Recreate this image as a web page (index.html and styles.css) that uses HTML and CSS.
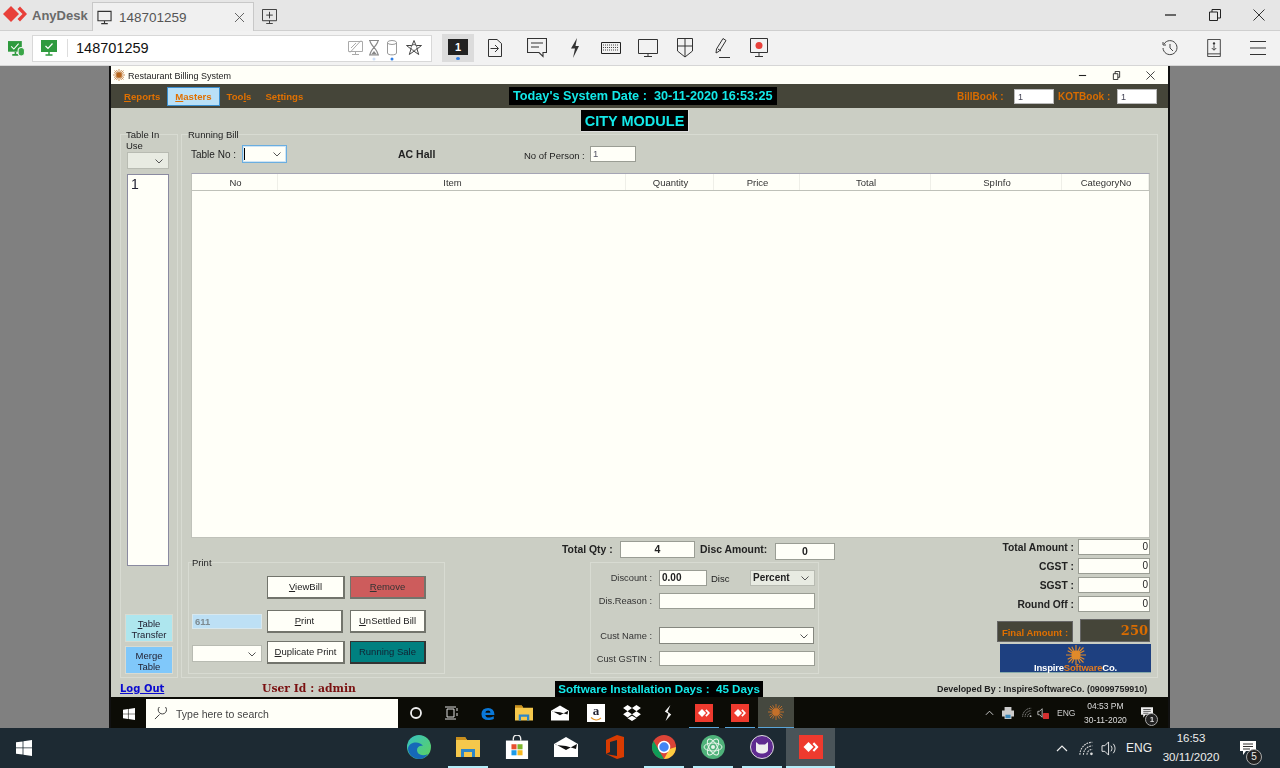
FILE: index.html
```html
<!DOCTYPE html>
<html lang="en">
<head>
    <meta charset="UTF-8">
    <title>AnyDesk</title>
    <link rel="stylesheet" href="styles.css">
</head>
<body>
<svg class="defs" width="0" height="0">
    <symbol id="ad" viewBox="0 0 24 16"><path d="M8 0L16 8L8 16L0 8Z" fill="currentColor"/><path d="M17 .5L24 8L17 15.500L14.500 13L19.500 8L14.500 3Z" fill="currentColor"/></symbol>
    <symbol id="mon" viewBox="0 0 16 16"><path d="M1 1.500H15V11.500H1ZM8 11.500V14.500M4.500 14.500H11.500" fill="none" stroke="currentColor" stroke-width="1.200"/></symbol>
    <symbol id="win" viewBox="0 0 16 16"><path d="M0 2.300L6.600 1.400V7.500H0ZM7.400 1.300L16 0V7.500H7.400ZM0 8.300H6.600V14.600L0 13.700ZM7.400 8.300H16V16L7.400 14.700Z" fill="currentColor"/></symbol>
    <symbol id="mail" viewBox="0 0 24 20"><path d="M0 7L12 0L24 7V20H0Z" fill="#fff"/><path d="M1 7L12 13L23 7L22 12L12 9L2 8Z" fill="#111"/></symbol>
    <symbol id="folder" viewBox="0 0 24 20"><path d="M0 0H9L11 3H24V20H0Z" fill="#f5c84c"/><path d="M0 0H9L11 3H0Z" fill="#c98f1d"/><path d="M5 12H19V20H16V15H8V20H5Z" fill="#2c86c8"/></symbol>
    <symbol id="wifi" viewBox="0 0 18 16"><path d="M1 15A14 14 0 0 1 15 1M5 15A10 10 0 0 1 15 5M9 15A6 6 0 0 1 15 9" fill="none" stroke="currentColor" stroke-width="1.200" stroke-dasharray="2 1"/><circle cx="14" cy="14" r="1.500" fill="currentColor"/></symbol>
    <symbol id="note" viewBox="0 0 16 14"><path d="M0 0H16V10H6L3 14V10H0Z" fill="currentColor"/><path d="M3 3H13M3 5.500H13M3 8H10" stroke="#333" stroke-width="1"/></symbol>
    <symbol id="sun" viewBox="0 0 24 24"><path d="M12 0V24M0 12H24M3 3L21 21M21 3L3 21M7 2L17 22M17 2L7 22M2 7L22 17M2 17L22 7" stroke="currentColor" stroke-width="1.400"/><circle cx="12" cy="12" r="5.500" fill="currentColor"/></symbol>
</svg>

<div class="tabbar">
    <svg class="logo"><use href="#ad"/></svg>
    <span class="brand">AnyDesk</span>
    <div class="tab">
        <svg class="tab-mon"><use href="#mon"/></svg>
        <span class="tab-text">148701259</span>
        <svg class="tab-x" viewBox="0 0 10 10"><path d="M0 0L10 10M10 0L0 10" stroke="#555" fill="none"/></svg>
    </div>
    <svg class="newtab" viewBox="0 0 16 16"><path d="M.5 .5H15.500V12.500H.5ZM8 3V10M4.500 6.500H11.500M8 12.500V15.500M4.500 15.500H11.500" fill="none" stroke="#333"/></svg>
    <div class="winctl">
        <svg viewBox="0 0 12 12"><path d="M0 6H11" stroke="#222" stroke-width="1.300"/></svg>
        <svg viewBox="0 0 12 12"><path d="M.5 3H8.500V11.500H.5ZM3 3V.5H11.500V9H8.500" fill="none" stroke="#222"/></svg>
        <svg viewBox="0 0 12 12"><path d="M.5 .5L11.500 11.500M11.500 .5L.5 11.500" stroke="#333" fill="none"/></svg>
    </div>
</div>

<div class="toolbar">
    <svg class="status-ic" viewBox="0 0 16 16"><path d="M0 1H13V11H0Z" fill="#2e9a3e"/><path d="M3 6L5.500 8.500L10 3.500" stroke="#fff" fill="none"/><path d="M4 14H10M7 11V14" stroke="#2e9a3e" stroke-width="1.500"/><rect x="9.500" y="7" width="6" height="8" rx="3" fill="#3aa648" stroke="#f2f2f2"/></svg>
    <div class="addr">
        <svg class="addr-ic" viewBox="0 0 16 16"><path d="M0 0H16V12H0Z" fill="#2e9a3e"/><path d="M4.500 6L7 8.500L11.500 3.500" stroke="#fff" fill="none" stroke-width="1.200"/><path d="M4.500 15H11.500M8 12V15" stroke="#2e9a3e" stroke-width="1.500"/></svg>
        <span class="addr-text">148701259</span>
        <div class="addr-icons">
            <svg class="ai-mon" viewBox="0 0 15 22"><path d="M.5 1.500H14.500V11.500H.5ZM7.500 11.500V14.500M4 14.500H11M2 12.500L13 .5M3 8L8 3" fill="none" stroke="#aaa"/></svg>
            <svg class="ai-hour" viewBox="0 0 10 22"><path d="M0 .5H10M0 15H10M1 .5C1 5.500 9 9 9 15H1C1 9 9 5.500 9 .5" fill="none" stroke="#888" stroke-width="1.200"/><path d="M2 14.500L5 11L8 14.500Z" fill="#888"/><circle cx="5" cy="19" r="1.500" fill="#cfe0f7"/></svg>
            <svg class="ai-cyl" viewBox="0 0 10 22"><ellipse cx="5" cy="2.500" rx="4.500" ry="2" fill="none" stroke="#999"/><path d="M.5 2.500V13C.5 15.500 9.500 15.500 9.500 13V2.500" fill="none" stroke="#999"/><circle cx="5" cy="19" r="1.500" fill="#2f7fe6"/></svg>
            <svg class="ai-star" viewBox="0 0 16 22"><path d="M8 .5L10 5.500H15.500L11 9L12.700 14.500L8 11.200L3.300 14.500L5 9L.5 5.500H6Z" fill="none" stroke="#444"/><circle cx="8" cy="7.500" r="3" fill="none" stroke="#666"/></svg>
        </div>
    </div>
    <div class="session"><span>1</span></div>
    <div class="tools">
        <svg class="t-door" viewBox="0 0 14 18"><path d="M.5 .5H9L13.500 4.500V17.500H.5ZM2.500 9.500H10M7 6L10.500 9.500L7 13" fill="none" stroke="#333"/></svg>
        <svg class="t-chat" viewBox="0 0 20 20"><path d="M.5 .5H19.500V14.500H16V18.500L12 14.500H.5ZM4 5H16M4 9H12" fill="none" stroke="#333" stroke-width="1.100"/></svg>
        <svg class="t-bolt" viewBox="0 0 10 20"><path d="M7 0L1 10.500H5L3 20L9 8H5.500Z" fill="#333"/></svg>
        <svg class="t-kbd" viewBox="0 0 20 12"><path d="M.5 .5H19.500V11.500H.5Z" fill="none" stroke="#222"/><path d="M2 3H18M2 5.500H18M2 8H18" stroke="#444" stroke-dasharray="1 1"/></svg>
        <svg class="t-mon" viewBox="0 0 20 18"><path d="M.5 .5H19.500V14.500H.5ZM10 14.500V17.500M6 17.500H14" fill="none" stroke="#333"/></svg>
        <svg class="t-shield" viewBox="0 0 16 20"><path d="M.5 .5H15.500V13L8 19L.5 13ZM8 .5V19M.5 8H15.500" fill="none" stroke="#333"/></svg>
        <svg class="t-pen" viewBox="0 0 15 20"><path d="M1 15L1.500 11L8 .5L11 2.500L4.500 13ZM4 19.500H15M3 11L6 13" fill="none" stroke="#333"/></svg>
        <svg class="t-rec" viewBox="0 0 18 20"><path d="M.5 .5H17.500V14.500H.5ZM9 14.500V18.500M5 18.500H13" fill="none" stroke="#333"/><circle cx="9" cy="7.500" r="3.500" fill="#e8403a"/></svg>
    </div>
    <div class="tools-right">
        <svg viewBox="0 0 16 16"><path d="M2 4A7 7 0 1 1 1 8M1 2V5H4M8 4V8L11 11" fill="none" stroke="#444"/></svg>
        <svg viewBox="0 0 16 20"><path d="M1 .5H15V19.500H1ZM1 16.500H15M8 7V12M5.500 10L8 12.500L10.500 10" fill="none" stroke="#333"/><circle cx="8" cy="5" r="1.300" fill="#333"/></svg>
        <svg viewBox="0 0 16 16"><path d="M0 1.500H16M0 8H16M0 14.500H16" stroke="#333"/></svg>
    </div>
</div>

<div class="remote">
    <div class="screen">
        <div class="titlebar">
            <svg class="app-ic"><use href="#sun"/></svg>
            <span class="app-title">Restaurant Billing System</span>
            <div class="app-ctl">
                <svg viewBox="0 0 10 10"><path d="M1 5H9" stroke="#222" stroke-width="1.200"/></svg>
                <svg viewBox="0 0 10 10"><path d="M1.500 3H6.500V9.500H1.500ZM3.500 3V.5H8.500V7H6.500" fill="none" stroke="#222"/></svg>
                <svg viewBox="0 0 10 10"><path d="M.5 .5L9.500 9.500M9.500 .5L.5 9.500" stroke="#333"/></svg>
            </div>
        </div>
        <div class="menubar">
            <div class="menus">
                <span class="menu"><u>R</u>eports</span>
                <span class="menu menu-on"><u>M</u>asters</span>
                <span class="menu">Too<u>l</u>s</span>
                <span class="menu">Se<u>t</u>tings</span>
            </div>
            <span class="sysdate">Today's System Date :&nbsp; 30-11-2020 16:53:25</span>
            <span class="book book-bill">BillBook :</span>
            <span class="book-in">1</span>
            <span class="book book-kot">KOTBook :</span>
            <span class="book-in">1</span>
        </div>

        <div class="appbody">
            <div class="module"><span>CITY MODULE</span></div>
            <div class="columns">
                <div class="group side">
                    <div class="side-label">Table In Use</div>
                    <div class="combo combo-side"><svg class="chev" viewBox="0 0 8 5"><path d="M.5 .5L4 4L7.500 .5" fill="none" stroke="#555"/></svg></div>
                    <div class="listbox">1</div>
                    <div class="sidebtn sidebtn-a"><u>T</u>able<br>Transfer</div>
                    <div class="sidebtn sidebtn-b">Merge<br>Table</div>
                </div>

                <div class="group main">
                    <div class="legend">Running Bill</div>
                    <div class="toprow">
                        <span class="tn-label">Table No :</span>
                        <div class="combo combo-table"><i class="caret"></i><svg class="chev" viewBox="0 0 8 5"><path d="M.5 .5L4 4L7.500 .5" fill="none" stroke="#555"/></svg></div>
                        <span class="hall">AC Hall</span>
                        <span class="persons">No of Person :</span>
                        <span class="field field-persons">1</span>
                    </div>

                    <div class="bill">
                        <div class="bill-head">
                            <span>No</span><span>Item</span><span>Quantity</span><span>Price</span><span>Total</span><span>SpInfo</span><span>CategoryNo</span>
                        </div>
                    </div>

                    <div class="bottom">
                        <div class="group print">
                            <div class="legend">Print</div>
                            <div class="print-row print-first">
                                <span class="print-blank"></span>
                                <span class="btn btn-l"><u>V</u>iewBill</span>
                                <span class="btn btn-red"><u>R</u>emove</span>
                            </div>
                            <div class="print-row print-second">
                                <span class="bill-no">611</span>
                                <span class="btn btn-s"><u>P</u>rint</span>
                                <span class="btn btn-r"><u>U</u>nSettled Bill</span>
                            </div>
                            <div class="print-row print-third">
                                <div class="combo combo-print"><svg class="chev" viewBox="0 0 8 5"><path d="M.5 .5L4 4L7.500 .5" fill="none" stroke="#555"/></svg></div>
                                <span class="btn btn-l"><u>D</u>uplicate Print</span>
                                <span class="btn btn-teal">Running Sale</span>
                            </div>
                        </div>

                        <div class="center">
                            <div class="qty-row">
                                <b class="qty-label">Total Qty :</b>
                                <span class="field field-qty">4</span>
                                <b class="disc-label">Disc Amount:</b>
                                <span class="field field-disc">0</span>
                            </div>
                            <div class="group discount">
                                <div class="form-row form-first">
                                    <span class="form-label">Discount :</span>
                                    <span class="field field-pct">0.00</span>
                                    <span class="disc-word">Disc</span>
                                    <div class="combo combo-pct">Percent<svg class="chev" viewBox="0 0 8 5"><path d="M.5 .5L4 4L7.500 .5" fill="none" stroke="#555"/></svg></div>
                                </div>
                                <div class="form-row form-reason">
                                    <span class="form-label">Dis.Reason :</span>
                                    <span class="field field-wide"></span>
                                </div>
                                <div class="form-row form-name">
                                    <span class="form-label">Cust Name :</span>
                                    <div class="combo combo-name"><svg class="chev" viewBox="0 0 8 5"><path d="M.5 .5L4 4L7.500 .5" fill="none" stroke="#555"/></svg></div>
                                </div>
                                <div class="form-row form-gst">
                                    <span class="form-label">Cust GSTIN :</span>
                                    <span class="field field-wide"></span>
                                </div>
                            </div>
                        </div>

                        <div class="totals">
                            <div class="total-row"><b>Total Amount :</b><span class="field field-num">0</span></div>
                            <div class="total-row"><b>CGST :</b><span class="field field-num">0</span></div>
                            <div class="total-row"><b>SGST :</b><span class="field field-num">0</span></div>
                            <div class="total-row"><b>Round Off :</b><span class="field field-num">0</span></div>
                            <div class="final-row">
                                <span class="final-label">Final Amount :</span>
                                <span class="final-value">250</span>
                            </div>
                            <div class="brandbox">
                                <svg class="brand-sun"><use href="#sun"/></svg>
                                <span class="brand-name">Inspire<em>Software</em>Co.</span>
                            </div>
                        </div>
                    </div>
                </div>
            </div>
        </div>

        <div class="statusbar">
            <a class="logout">Log Out</a>
            <span class="userid">User Id : admin</span>
            <span class="days">Software Installation Days :&nbsp; 45 Days</span>
            <span class="dev">Developed By : InspireSoftwareCo. (09099759910)</span>
        </div>

        <div class="rtask">
            <svg class="r-start"><use href="#win"/></svg>
            <div class="r-search">
                <svg viewBox="0 0 14 14"><path d="M13 1A1 1 0 0 0 5 5A4 4 0 1 0 13 1ZM6 8L1 13" fill="none" stroke="#333"/></svg>
                <span>Type here to search</span>
            </div>
            <span class="slot"><svg class="s14" viewBox="0 0 14 14"><circle cx="7" cy="7" r="5" fill="none" stroke="#eee" stroke-width="1.800"/></svg></span>
            <span class="slot"><svg class="s14" viewBox="0 0 14 14"><path d="M2 3H9V11H2ZM0 1H11M0 13H11M12 2V5M12 7V10" fill="none" stroke="#ddd"/></svg></span>
            <span class="slot"><span class="edge-e">e</span></span>
            <span class="slot"><svg class="s18"><use href="#folder"/></svg></span>
            <span class="slot"><svg class="s18"><use href="#mail"/></svg></span>
            <span class="slot"><span class="amazon">a<svg viewBox="0 0 12 4"><path d="M1 .5C4 3.500 8 3.500 11 1" fill="none" stroke="#e8962a" stroke-width="1.200"/></svg></span></span>
            <span class="slot"><svg class="s18" viewBox="0 0 20 18"><path d="M5 0L10 3.500L5 7L0 3.500ZM15 0L20 3.500L15 7L10 3.500ZM5 7L10 10.500L5 14L0 10.500ZM15 7L20 10.500L15 14L10 10.500ZM5 15L10 12L15 15L10 18Z" fill="#fff"/></svg></span>
            <span class="slot"><svg class="s18" viewBox="0 0 10 20"><path d="M8 0L1 8L5.500 11L2 20L9 12L4.500 8.500Z" fill="#f4f4f4"/></svg></span>
            <span class="slot slot-line"><svg class="adsq"><use href="#ad"/></svg></span>
            <span class="slot slot-line"><svg class="adsq"><use href="#ad"/></svg></span>
            <span class="slot slot-on"><svg class="s18 r-sun"><use href="#sun"/></svg></span>
            <div class="r-tray">
                <svg class="r-up" viewBox="0 0 10 6"><path d="M1 5L5 1L9 5" fill="none" stroke="#ddd"/></svg>
                <svg class="r-print" viewBox="0 0 14 14"><path d="M3 0H11V4H3ZM0 4H14V11H11V14H3V11H0Z" fill="#ccc"/><path d="M4 9H10V13H4Z" fill="#3b87b8"/></svg>
                <svg class="r-wifi"><use href="#wifi"/></svg>
                <svg class="r-vol" viewBox="0 0 14 14"><path d="M1 5H3L6 2V12L3 9H1Z" fill="none" stroke="#ccc"/><rect x="7" y="7" width="7" height="7" rx="1" fill="#d32f2f"/></svg>
                <span class="r-eng">ENG</span>
                <span class="r-clock">04:53 PM<br>30-11-2020</span>
                <span class="r-note"><svg><use href="#note"/></svg><b>1</b></span>
            </div>
        </div>
    </div>
</div>

<div class="taskbar">
    <svg class="start"><use href="#win"/></svg>
    <span class="tslot">
        <svg class="s24" viewBox="0 0 24 24"><defs><linearGradient id="eg" x1="0" y1="0" x2="1" y2="1"><stop offset="0" stop-color="#35c1c4"/><stop offset="1" stop-color="#5fd35a"/></linearGradient></defs><circle cx="12" cy="12" r="12" fill="url(#eg)"/><path d="M1 13C1 20 7 24 12 24C16 24 19 22 21 19C15 22 10 19 10 15C10 12 13 10 16 11C13 6 3 6 1 13Z" fill="#1668b8"/></svg>
    </span>
    <span class="tslot tslot-line"><svg class="s24"><use href="#folder"/></svg></span>
    <span class="tslot">
        <svg class="s24" viewBox="0 0 24 26"><path d="M8 6V4A4 4 0 0 1 16 4V6" fill="none" stroke="#eee" stroke-width="1.500"/><path d="M0 6H24V26H0Z" fill="#fff"/><path d="M6 10H11.500V15.500H6Z" fill="#e8502f"/><path d="M12.500 10H18V15.500H12.500Z" fill="#7db52d"/><path d="M6 16.500H11.500V22H6Z" fill="#1e9be8"/><path d="M12.500 16.500H18V22H12.500Z" fill="#f8b81f"/></svg>
    </span>
    <span class="tslot"><svg class="s24"><use href="#mail"/></svg></span>
    <span class="tslot"><svg class="s24" viewBox="0 0 18 24"><path d="M0 5L11 0L18 2V22L11 24L0 19L11 21V5L4 7V17L0 19Z" fill="#d83b01"/></svg></span>
    <span class="tslot tslot-line">
        <svg class="s24" viewBox="0 0 24 24"><circle cx="12" cy="12" r="12" fill="#db4437"/><path d="M12 24A12 12 0 0 1 1.600 6L7 15.500L12 24Z" fill="#0f9d58"/><path d="M12 24L17.500 14L24 12A12 12 0 0 1 12 24Z" fill="#ffcd40"/><circle cx="12" cy="12" r="5.500" fill="#4285f4" stroke="#fff" stroke-width="1.500"/></svg>
    </span>
    <span class="tslot tslot-line">
        <svg class="s24" viewBox="0 0 24 24"><circle cx="12" cy="12" r="12" fill="#4fb27a"/><g fill="none" stroke="#e8f4ea"><ellipse cx="12" cy="12" rx="9" ry="4"/><ellipse cx="12" cy="12" rx="9" ry="4" transform="rotate(60 12 12)"/><ellipse cx="12" cy="12" rx="9" ry="4" transform="rotate(120 12 12)"/></g><circle cx="12" cy="12" r="2" fill="#e8f4ea"/></svg>
    </span>
    <span class="tslot tslot-line">
        <svg class="s24" viewBox="0 0 24 24"><circle cx="12" cy="12" r="11.500" fill="#5f2b90" stroke="#ddd"/><path d="M6 7L9 9.500H15L18 7V15C18 17 15 18.500 12 18.500C9 18.500 6 17 6 15Z" fill="#eee"/></svg>
    </span>
    <span class="tslot tslot-on"><svg class="adsq adsq-big"><use href="#ad"/></svg></span>
    <div class="tray">
        <svg class="tr-up" viewBox="0 0 12 7"><path d="M1 6L6 1L11 6" fill="none" stroke="#eee" stroke-width="1.200"/></svg>
        <svg class="tr-wifi"><use href="#wifi"/></svg>
        <svg class="tr-vol" viewBox="0 0 18 16"><path d="M1 5H4L8 1V15L4 11H1ZM10.500 5C12 7 12 9 10.500 11M13 3C15.500 6 15.500 10 13 13" fill="none" stroke="#eee"/></svg>
        <span class="tr-eng">ENG</span>
        <span class="tr-clock">16:53<br>30/11/2020</span>
        <span class="tr-note"><svg><use href="#note"/></svg><b>5</b></span>
    </div>
</div>
</body>
</html>
```

FILE: styles.css
```css
* {
    box-sizing: border-box;
}

html, body {
    margin: 0;
    padding: 0;
}

body {
    width: 1280px;
    height: 768px;
    overflow: hidden;
    display: flex;
    flex-direction: column;
    font-family: "Liberation Sans", Arial, sans-serif;
    font-size: 10px;
    color: #222;
    background: #808080;
}

svg {
    display: block;
    flex: none;
}

.defs {
    position: absolute;
}

/* anydesk window */
.tabbar {
    height: 31px;
    flex: none;
    display: flex;
    align-items: flex-end;
    background: #e6e6e6;
    border-bottom: 1px solid #cfcfcf;
}

.logo {
    width: 24px;
    height: 16px;
    margin: 0 0 8px 3px;
    color: #e8403a;
}

.brand {
    width: 60px;
    margin-left: 5px;
    padding-bottom: 7px;
    font-size: 13px;
    font-weight: bold;
    color: #6a6a6a;
}

.tab {
    width: 162px;
    height: 29px;
    margin-bottom: -1px;
    display: flex;
    align-items: center;
    background: #f0f0f0;
    border: 1px solid #c8c8c8;
    border-bottom: 0;
}

.tab-mon {
    width: 15px;
    height: 15px;
    margin-left: 4px;
    color: #333;
}

.tab-text {
    width: 110px;
    margin-left: 7px;
    font-size: 13.500px;
    color: #555;
}

.tab-x {
    width: 9px;
    height: 9px;
    margin-left: 6px;
}

.newtab {
    width: 15px;
    height: 15px;
    margin: 0 0 6px 8px;
}

.winctl {
    margin-left: auto;
    display: flex;
    gap: 32px;
    padding: 0 15px 9px 0;
}

.winctl svg {
    width: 12px;
    height: 12px;
}

.toolbar {
    height: 35px;
    flex: none;
    display: flex;
    align-items: center;
    background: #f2f2f2;
    border-bottom: 1px solid #d6d6d6;
}

.status-ic {
    width: 17px;
    height: 17px;
    margin-left: 8px;
}

.addr {
    width: 400px;
    height: 27px;
    margin-left: 7px;
    display: flex;
    align-items: center;
    background: #fff;
    border: 1px solid #d8d8d8;
}

.addr-ic {
    width: 16px;
    height: 16px;
    margin-left: 8px;
}

.addr-text {
    margin-left: 10px;
    padding-left: 8px;
    border-left: 1px solid #ddd;
    font-size: 14.500px;
    line-height: 18px;
    color: #111;
}

.addr-icons {
    margin-left: auto;
    display: flex;
    padding: 5px 9px 0 0;
}

.addr-icons svg {
    height: 22px;
}

.ai-mon { width: 15px; }
.ai-hour { width: 10px; margin-left: 6px; }
.ai-cyl { width: 10px; margin-left: 8px; }
.ai-star { width: 16px; margin-left: 9px; }

.session {
    position: relative;
    width: 32px;
    height: 28px;
    margin-left: 10px;
    display: flex;
    align-items: center;
    justify-content: center;
    background: #dcdcdc;
}

.session span {
    width: 20px;
    height: 16px;
    margin-top: -2px;
    background: #222;
    color: #fff;
    font-size: 11px;
    font-weight: bold;
    line-height: 16px;
    text-align: center;
}

.session::after {
    content: "";
    position: absolute;
    left: 14px;
    bottom: 2px;
    width: 4px;
    height: 3px;
    border-radius: 50%;
    background: #2f7fe6;
}

.tools {
    display: flex;
    align-items: center;
    margin-left: 14px;
}

.t-door { width: 14px; height: 18px; }
.t-chat { width: 20px; height: 20px; margin-left: 25px; }
.t-bolt { width: 10px; height: 20px; margin-left: 23px; }
.t-kbd { width: 20px; height: 12px; margin-left: 21px; }
.t-mon { width: 20px; height: 18px; margin-left: 17px; }
.t-shield { width: 16px; height: 20px; margin-left: 19px; }
.t-pen { width: 15px; height: 20px; margin-left: 22px; }
.t-rec { width: 18px; height: 20px; margin-left: 20px; }

.tools-right {
    margin-left: auto;
    padding-right: 14px;
    display: flex;
    align-items: center;
    gap: 28px;
}

.tools-right svg {
    width: 16px;
    height: 18px;
}

.remote {
    flex: 1;
    min-height: 0;
    display: flex;
    padding-left: 109px;
}

.screen {
    width: 1061px;
    display: flex;
    flex-direction: column;
    border-left: 2px solid #111;
    border-right: 2px solid #111;
    filter: blur(.3px);
}

/* billing app */
.titlebar {
    height: 18px;
    flex: none;
    display: flex;
    align-items: center;
    background: #fffff8;
}

.app-ic {
    width: 12px;
    height: 12px;
    margin-left: 2px;
    color: #b5651d;
}

.app-title {
    margin: 1px 0 0 3px;
    font-size: 9px;
    color: #222;
}

.app-ctl {
    margin-left: auto;
    display: flex;
    gap: 25px;
    padding-right: 13px;
}

.app-ctl svg {
    width: 9px;
    height: 9px;
}

.menubar {
    height: 24px;
    flex: none;
    display: flex;
    align-items: center;
    background: #454539;
}

.menus {
    width: 398px;
    flex: none;
    display: flex;
    align-items: center;
    padding-left: 6px;
}

.menu {
    padding: 0 7px;
    height: 19px;
    display: flex;
    align-items: center;
    font-size: 9.600px;
    font-weight: bold;
    color: #e07000;
    white-space: pre;
}

.menu-on {
    background: #b9e0f7;
    border: 1px solid #3a8fd0;
}

.sysdate {
    width: 268px;
    height: 18px;
    flex: none;
    padding-left: 4px;
    background: #000;
    color: #14e8e8;
    font-size: 12.700px;
    font-weight: bold;
    line-height: 18px;
    white-space: nowrap;
}

.book {
    font-size: 10px;
    font-weight: bold;
    color: #d96c00;
    white-space: nowrap;
}

.book-bill {
    width: 57px;
    margin-left: 180px;
}

.book-kot {
    width: 59px;
    margin-left: 4px;
}

.book-in {
    width: 40px;
    height: 15px;
    padding: 2px 0 0 3px;
    background: #fff;
    border: 1px solid #bbb;
    font-size: 9px;
    line-height: 11px;
    color: #445;
}

.appbody {
    flex: 1;
    min-height: 0;
    display: flex;
    flex-direction: column;
    background: #cbcec4;
}

.module {
    height: 26px;
    flex: none;
    padding: 2px 0 0 470px;
}

.module span {
    display: block;
    width: 108px;
    height: 22px;
    background: #000;
    border: 1px solid #ddd;
    border-width: 0 1px 1px 0;
    color: #14e8e8;
    font-size: 14.500px;
    font-weight: bold;
    line-height: 22px;
    text-align: center;
}

.columns {
    flex: 1;
    min-height: 0;
    display: flex;
    gap: 3px;
    padding: 0 0 2px 9px;
}

.group {
    border: 1px solid #d8dbd2;
}

.legend {
    height: 11px;
    margin-top: -6px;
    line-height: 11px;
    font-size: 9.500px;
    white-space: nowrap;
}

.side {
    width: 58px;
    flex: none;
    display: flex;
    flex-direction: column;
    padding: 0 5px;
}

.side-label {
    height: 23px;
    margin-top: -6px;
    line-height: 11px;
    font-size: 9.500px;
}

.combo {
    position: relative;
    background: #fffff8;
    border: 1px solid #b8bbb2;
}

.chev {
    position: absolute;
    right: 5px;
    top: 50%;
    width: 8px;
    height: 5px;
    margin-top: -2px;
}

.combo-side {
    width: 42px;
    height: 17px;
    margin-left: 1px;
    background: #e8ebe2;
}

.listbox {
    width: 42px;
    height: 392px;
    margin: 5px 0 0 1px;
    padding-left: 3px;
    background: #fffff8;
    border: 1px solid #8a8aa0;
    font-size: 14px;
    line-height: 19px;
    color: #223;
}

.sidebtn {
    width: 48px;
    height: 28px;
    margin-left: -1px;
    padding-top: 3px;
    border: 1px solid #d8dbd2;
    text-align: center;
    font-size: 9.500px;
    line-height: 11px;
    color: #223;
}

.sidebtn-a {
    margin-top: 48px;
    background: #aee6ee;
}

.sidebtn-b {
    margin-top: 4px;
    background: #80c8fa;
}

.main {
    width: 977px;
    flex: none;
    display: flex;
    flex-direction: column;
    padding: 0 7px 0 9px;
}

.main > .legend {
    margin-left: -3px;
}

.toprow {
    height: 18px;
    margin-top: 5px;
    flex: none;
    display: flex;
    align-items: center;
    font-size: 9.500px;
}

.tn-label {
    width: 51px;
    font-size: 10px;
}

.combo-table {
    width: 45px;
    height: 18px;
    border: 1px solid #6aaee0;
    box-shadow: 0 0 0 1px #cfe4f4 inset;
}

.caret {
    display: block;
    width: 1px;
    height: 12px;
    margin: 2px 0 0 1px;
    background: #000;
}

.hall {
    width: 38px;
    margin-left: 111px;
    font-size: 10.500px;
    font-weight: bold;
    white-space: nowrap;
}

.persons {
    width: 66px;
    margin: 3px 0 0 88px;
    white-space: nowrap;
    font-size: 9.500px;
}

.field {
    display: block;
    background: #fffff8;
    border: 1px solid #9a9d94;
    white-space: nowrap;
}

.field-persons {
    width: 46px;
    height: 16px;
    padding-left: 2px;
    line-height: 14px;
    font-size: 9.500px;
    color: #556;
}

.bill {
    height: 365px;
    margin-top: 10px;
    flex: none;
    background: #fffff8;
    border: 1px solid #c0c2ba;
    border-top-color: #a5a5b5;
}

.bill-head {
    height: 17px;
    display: grid;
    grid-template-columns: 86px 348px 88px 86px 131px 131px 87px;
    border-bottom: 1px solid #bfc1b9;
    font-size: 9.500px;
    line-height: 15px;
    text-align: center;
    color: #333;
}

.bill-head span {
    padding: 1px 0 0 2px;
    border-right: 1px solid #efefe8;
}

.bottom {
    flex: 1;
    min-height: 0;
    display: flex;
    margin-left: -3px;
}

.print {
    width: 257px;
    height: 112px;
    flex: none;
    margin-top: 24px;
    padding-left: 3px;
}

.print-row {
    display: flex;
    align-items: center;
    height: 23px;
}

.print-first { margin-top: 8px; }
.print-second { margin-top: 11px; }
.print-third { margin-top: 8px; }

.print-blank,
.bill-no,
.combo-print {
    width: 70px;
    margin-right: 5px;
}

.bill-no {
    height: 15px;
    padding-left: 2px;
    background: #bde0f5;
    border: 1px solid #d8e8ee;
    font-size: 9.500px;
    line-height: 13px;
    font-weight: bold;
    color: #7d8a90;
}

.combo-print {
    height: 17px;
    margin-top: 2px;
}

.btn {
    height: 23px;
    background: #fffff8;
    border: 1px solid #72746c;
    border-width: 1px 2px 2px 1px;
    text-align: center;
    font-size: 9.500px;
    line-height: 20px;
    white-space: nowrap;
    color: #222;
}

.btn-l { width: 78px; margin-right: 5px; }
.btn-s { width: 76px; margin-right: 7px; }
.btn-r { width: 76px; }

.btn-red {
    width: 76px;
    background: #cd5c5c;
    color: #333;
}

.btn-teal {
    width: 76px;
    background: #008080;
    border-color: #333;
    color: #123;
}

.center {
    width: 273px;
    flex: none;
    margin-left: 117px;
}

.qty-row {
    height: 24px;
    display: flex;
    padding-top: 3px;
    font-size: 10.400px;
}

.qty-label {
    width: 58px;
    line-height: 17px;
    white-space: nowrap;
}

.field-qty {
    width: 75px;
    height: 17px;
    text-align: center;
    font-size: 10.500px;
    font-weight: bold;
    line-height: 15px;
}

.disc-label {
    width: 75px;
    margin-left: 5px;
    line-height: 18px;
    white-space: nowrap;
}

.field-disc {
    width: 60px;
    height: 17px;
    margin-top: 2px;
    text-align: center;
    font-size: 10.500px;
    font-weight: bold;
    line-height: 15px;
}

.discount {
    width: 229px;
    height: 112px;
    margin-left: 28px;
}

.form-row {
    display: flex;
    align-items: center;
}

.form-first { height: 16px; margin-top: 7px; }
.form-reason { height: 16px; margin-top: 7px; }
.form-name { height: 17px; margin-top: 18px; }
.form-gst { height: 15px; margin-top: 7px; }

.form-label {
    width: 61px;
    flex: none;
    text-align: right;
    white-space: nowrap;
    font-size: 9.300px;
    color: #333;
}

.form-row > .field,
.form-row > .combo-name {
    margin-left: 7px;
}

.field-pct {
    width: 48px;
    height: 16px;
    padding-left: 2px;
    font-size: 10px;
    font-weight: bold;
    line-height: 14px;
}

.disc-word {
    width: 39px;
    margin-left: 4px;
    font-size: 9.500px;
}

.combo-pct {
    width: 65px;
    height: 16px;
    padding-left: 2px;
    background: #e8ebe2;
    font-size: 10px;
    font-weight: bold;
    line-height: 14px;
}

.field-wide {
    width: 156px;
    height: 100%;
}

.combo-name {
    width: 155px;
    height: 17px;
    border-color: #85877f;
}

.totals {
    width: 154px;
    flex: none;
    margin-left: 162px;
    padding-top: 1px;
}

.total-row {
    height: 16px;
    margin-bottom: 3px;
    display: flex;
    align-items: center;
    justify-content: flex-end;
    font-size: 10.300px;
    white-space: nowrap;
    margin-right: 1px;
}

.field-num {
    width: 72px;
    height: 16px;
    margin-left: 4px;
    padding-right: 1px;
    flex: none;
    text-align: right;
    font-size: 10px;
    line-height: 14px;
}

.final-row {
    display: flex;
    align-items: flex-end;
    margin-top: 7px;
}

.final-label {
    width: 76px;
    height: 21px;
    background: #454539;
    border: 1px solid #666;
    color: #e07000;
    font-size: 9.500px;
    font-weight: bold;
    line-height: 21px;
    text-align: center;
    white-space: nowrap;
}

.final-value {
    width: 70px;
    height: 23px;
    margin: 0 0 0 7px;
    padding-right: 1px;
    background: #454539;
    border: 1px solid #666;
    color: #d96c00;
    font: bold 13px/21px "DejaVu Serif", serif;
    text-align: right;
}

.brandbox {
    width: 151px;
    height: 29px;
    margin: 2px 0 0 3px;
    display: flex;
    flex-direction: column;
    align-items: center;
    background: #1e4080;
    border-bottom: 1px solid #8aa;
}

.brand-sun {
    width: 20px;
    height: 20px;
    color: #e08a2a;
    margin-top: 1px;
}

.brand-name {
    margin-top: -3px;
    font-size: 9.500px;
    line-height: 11px;
    font-weight: bold;
    letter-spacing: -.2px;
    color: #fff;
}

.brand-name em {
    font-style: normal;
    color: #e07a20;
}

/* status line of the app */
.statusbar {
    height: 17px;
    flex: none;
    display: flex;
    align-items: center;
    background: #cbcec4;
}

.logout {
    width: 142px;
    margin-left: 9px;
    font: bold 10px "DejaVu Sans", sans-serif;
    color: #0a0ad0;
    text-decoration: underline;
}

.userid {
    width: 293px;
    font: bold 10.800px "DejaVu Serif", serif;
    color: #7a1010;
    white-space: nowrap;
}

.days {
    width: 208px;
    height: 16px;
    background: #000;
    color: #14e8e8;
    font-size: 11.600px;
    font-weight: bold;
    line-height: 16px;
    text-align: center;
    white-space: nowrap;
}

.dev {
    margin-left: 174px;
    font-size: 8.900px;
    font-weight: bold;
    color: #222;
    white-space: nowrap;
}

/* taskbar inside the remote screen */
.rtask {
    height: 31px;
    flex: none;
    display: flex;
    align-items: stretch;
    background: #0c0c06;
    color: #ddd;
}

.r-start {
    width: 12px;
    height: 12px;
    margin: 11px 11px 0 12px;
    color: #fff;
}

.r-search {
    width: 252px;
    margin-top: 2px;
    display: flex;
    align-items: center;
    background: #fffff8;
    color: #444;
    font-size: 10.500px;
}

.r-search svg {
    width: 13px;
    height: 13px;
    margin: 0 9px 0 8px;
}

.slot {
    width: 36px;
    display: flex;
    align-items: center;
    justify-content: center;
}

.slot-line {
    background: linear-gradient(#5aa5d8, #5aa5d8) center bottom / 30px 1px no-repeat;
}

.slot-on {
    background: #45483f;
    border-bottom: 1px solid #5aa5d8;
}

.s14 { width: 14px; height: 14px; }
.s18 { width: 18px; height: 16px; }
.s24 { width: 24px; height: 24px; }

.edge-e {
    font: bold 22px/22px "DejaVu Sans", sans-serif;
    color: #0a78d8;
}

.amazon {
    width: 18px;
    height: 18px;
    display: flex;
    flex-direction: column;
    align-items: center;
    background: #fff;
    color: #223;
    font: bold 13px/13px "Liberation Serif", serif;
}

.amazon svg {
    width: 12px;
    height: 4px;
}

.adsq {
    width: 18px;
    height: 18px;
    padding: 5px 3px;
    background: #ee3a2e;
    color: #fff;
}

.adsq-big {
    width: 24px;
    height: 24px;
    padding: 7px 4px;
}

.r-sun {
    color: #c4702a;
}

.r-tray {
    flex: 1;
    display: flex;
    align-items: center;
}

.r-up { width: 9px; height: 6px; margin-left: 191px; }
.r-print { width: 12px; height: 12px; margin-left: 8px; }
.r-wifi { width: 11px; height: 11px; margin-left: 8px; color: #bbb; }
.r-vol { width: 12px; height: 12px; margin-left: 4px; }

.r-eng {
    margin-left: 8px;
    font-size: 8.500px;
    color: #ccc;
}

.r-clock {
    width: 50px;
    margin-left: 5px;
    font-size: 8.500px;
    line-height: 14px;
    text-align: center;
    color: #ddd;
    white-space: nowrap;
}

.r-note {
    position: relative;
    margin-left: 11px;
}

.r-note svg {
    width: 12px;
    height: 11px;
    color: #eee;
}

.r-note b {
    position: absolute;
    left: 4px;
    top: 6px;
    width: 13px;
    height: 13px;
    border: 1px solid #aaa;
    border-radius: 50%;
    background: #222;
    color: #ddd;
    font-size: 8px;
    line-height: 11px;
    text-align: center;
}

/* local windows taskbar */
.taskbar {
    height: 40px;
    flex: none;
    display: flex;
    align-items: stretch;
    background: #1d2a33;
}

.start {
    width: 16px;
    height: 16px;
    margin: 12px 0 0 16px;
    color: #fff;
}

.tslot {
    width: 49px;
    display: flex;
    align-items: center;
    justify-content: center;
    padding-bottom: 2px;
}

.start + .tslot {
    margin-left: 362px;
}

.tslot-line {
    background: linear-gradient(#b4ecf8, #b4ecf8) center bottom / 40px 2px no-repeat;
}

.tslot-on {
    background: #4a5459;
    border-bottom: 2px solid #b4ecf8;
    padding-bottom: 0;
}

.tray {
    flex: 1;
    display: flex;
    align-items: center;
    color: #eee;
}

.tr-up { width: 12px; height: 7px; margin-left: 221px; }
.tr-wifi { width: 16px; height: 15px; margin-left: 11px; color: #ddd; }
.tr-vol { width: 17px; height: 15px; margin-left: 6px; }

.tr-eng {
    margin-left: 8px;
    font-size: 12px;
}

.tr-clock {
    width: 72px;
    margin-left: 3px;
    font-size: 11.500px;
    line-height: 19px;
    text-align: center;
    white-space: nowrap;
}

.tr-note {
    position: relative;
    margin-left: 13px;
}

.tr-note svg {
    width: 16px;
    height: 14px;
    color: #fff;
}

.tr-note b {
    position: absolute;
    left: 6px;
    top: 8px;
    width: 16px;
    height: 16px;
    border: 1px solid #aaa;
    border-radius: 50%;
    background: #222;
    color: #eee;
    font-size: 10px;
    font-weight: normal;
    line-height: 14px;
    text-align: center;
}
```
